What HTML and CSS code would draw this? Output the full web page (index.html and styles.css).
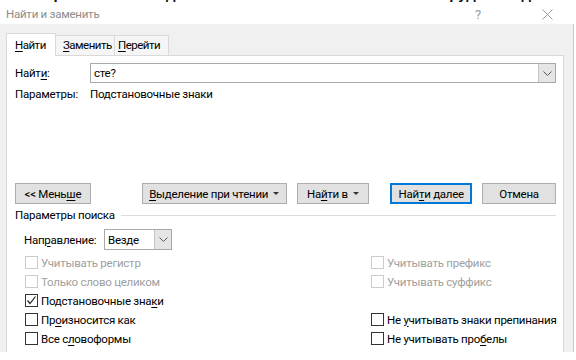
FILE: index.html
```html
<!DOCTYPE html>
<html lang="ru">
<head>
    <meta charset="UTF-8">
    <title>Найти и заменить</title>
    <link rel="stylesheet" href="styles.css">
</head>
<body>
    <div class="doc-text"><span>посмотреть текст сегодня тоже можно всем только если сотрудник отдела попросит</span></div>
    <div class="titlebar">
        <span class="title">Найти и заменить</span>
        <span class="help">?</span>
        <span class="close">
            <svg width="11" height="11" viewBox="0 0 11 11"><path d="M0.5 0.5 L10.5 10.5 M10.5 0.5 L0.5 10.5" stroke="#9a9a9a" stroke-width="1" fill="none"/></svg>
        </span>
    </div>
    <div class="dialog">
        <div class="tabs">
            <div class="tab active"><u>Н</u>айти</div>
            <div class="tab"><u>З</u>аменить</div>
            <div class="tab"><u>П</u>ерейти</div>
        </div>
        <div class="page">
            <div class="find-row">
                <span class="label">Найт<u>и</u>:</span>
                <div class="combo">
                    <span class="combo-text">сте?</span>
                    <span class="combo-arrow">
                        <svg width="9" height="5" viewBox="0 0 9 5"><path d="M0.5 0.5 L4.5 4.5 L8.5 0.5" stroke="#555" fill="none"/></svg>
                    </span>
                </div>
            </div>
            <div class="params-row">
                <span class="label">Параметры:</span>
                <span>Подстановочные знаки</span>
            </div>

            <div class="buttons">
                <button class="btn btn-less"><span>&lt;&lt; Мень<u>ш</u>е</span></button>
                <button class="btn btn-read"><span><u>В</u>ыделение при чтении</span><i class="caret"></i></button>
                <button class="btn btn-in"><span>На<u>й</u>ти в</span><i class="caret"></i></button>
                <button class="btn btn-next"><span>Най<u>т</u>и далее</span></button>
                <button class="btn btn-cancel"><span>Отмена</span></button>
            </div>

            <div class="group-title">Параметры поиска</div>

            <div class="direction">
                <span class="dir-label">Нап<u>р</u>авление:</span>
                <div class="select">
                    <span class="select-text">Везде</span>
                    <span class="select-arrow">
                        <svg width="9" height="5" viewBox="0 0 9 5"><path d="M0.5 0.5 L4.5 4.5 L8.5 0.5" stroke="#555" fill="none"/></svg>
                    </span>
                </div>
            </div>

            <div class="options">
                <label class="opt disabled"><span class="box"></span><span>Учитывать регистр</span></label>
                <label class="opt disabled"><span class="box"></span><span>Учитывать префикс</span></label>
                <label class="opt disabled"><span class="box"></span><span>Только слово целиком</span></label>
                <label class="opt disabled"><span class="box"></span><span>Учитывать суффикс</span></label>
                <label class="opt"><span class="box"><svg width="11" height="11" viewBox="0 0 11 11"><path d="M1.5 5.5 L4 8.5 L9.5 1.5" stroke="#222" stroke-width="1.2" fill="none"/></svg></span><span>Подстановочные зна<u>к</u>и</span></label>
                <span></span>
                <label class="opt"><span class="box"></span><span>Пр<u>о</u>износится как</span></label>
                <label class="opt"><span class="box"></span><span>Не <u>у</u>читывать знаки препинания</span></label>
                <label class="opt"><span class="box"></span><span>Все с<u>л</u>овоформы</span></label>
                <label class="opt"><span class="box"></span><span>Не учитывать про<u>б</u>елы</span></label>
            </div>
        </div>
    </div>
</body>
</html>
```

FILE: styles.css
```css
body {
    margin: 0;
    width: 576px;
    height: 360px;
    overflow: hidden;
    background-color: white;
    color: black;
    font-family: Roboto, "Noto Sans", sans-serif;
    font-size: 11.5px;
    letter-spacing: -0.25px;
}
u {
    text-decoration: underline;
    text-underline-offset: 2px;
}
.doc-text {
    height: 4px;
    overflow: hidden;
    white-space: nowrap;
}
.doc-text span {
    display: block;
    transform: translateY(-14px);
    font-family: "Liberation Sans", sans-serif;
    font-size: 15px;
    font-weight: bold;
    line-height: 15px;
    letter-spacing: 0;
    color: #111;
}
.titlebar {
    height: 20px;
    display: flex;
    align-items: center;
    padding: 0 23px 0 6px;
}
.title {
    color: #8c8c8c;
    flex: 1;
}
.help {
    color: #9a9a9a;
    font-size: 13px;
    width: 67px;
}
.close {
    width: 11px;
    display: flex;
}
.dialog {
    background-color: #f0f0f0;
    height: 328px;
    padding: 9px 9px 0 6px;
    box-sizing: border-box;
    border-right: 1px solid #c8c8c8;
    width: 574px;
    display: flex;
    flex-direction: column;
}
.tabs {
    display: flex;
    align-items: flex-end;
    height: 22px;
    letter-spacing: -0.5px;
}
.tab {
    height: 19px;
    line-height: 19px;
    border: 1px solid #d9d9d9;
    border-bottom: none;
    border-left: none;
    background-color: #f5f5f5;
    padding-left: 7px;
}
.tab:nth-child(2) { width: 51px; }
.tab:nth-child(3) { width: 50px; padding-left: 3px; }
.tab.active {
    height: 22px;
    line-height: 22px;
    width: 40px;
    padding-left: 8px;
    background-color: white;
    border-left: 1px solid #d9d9d9;
    position: relative;
    top: 1px;
}
.page {
    flex: 1;
    background-color: white;
    border: 1px solid #d9d9d9;
    border-bottom: none;
    padding: 7px 7px 0 8px;
}
.find-row {
    display: flex;
    align-items: center;
}
.label {
    width: 75px;
    flex-shrink: 0;
}
.combo {
    flex: 1;
    height: 18px;
    border: 1px solid #a9a9a9;
    display: flex;
    align-items: center;
}
.combo-text {
    flex: 1;
    padding-left: 3px;
}
.combo-arrow, .select-arrow {
    width: 16px;
    height: 100%;
    background-color: #e5e5e5;
    border-left: 1px solid #c4c4c4;
    display: flex;
    align-items: center;
    justify-content: center;
}
.params-row {
    display: flex;
    margin-top: 3px;
    line-height: 16px;
}
.buttons {
    display: flex;
    margin-top: 81px;
}
.btn {
    height: 21px;
    padding: 0;
    background-color: #e1e1e1;
    border: 1px solid #adadad;
    font-family: inherit;
    font-size: 11.5px;
    letter-spacing: -0.25px;
    color: black;
    display: flex;
    align-items: center;
    justify-content: center;
    white-space: nowrap;
}
.btn-less { width: 76px; }
.btn-read { width: 145px; margin-left: 51px; }
.btn-in { width: 73px; margin-left: 10px; }
.btn-next {
    width: 82px;
    margin-left: 21px;
    border-color: #0078d7;
    box-shadow: inset 0 0 0 1px #0078d7;
}
.btn-cancel { width: 74px; margin-left: 10px; }
.caret {
    display: inline-block;
    margin-left: 5px;
    border-left: 3px solid transparent;
    border-right: 3px solid transparent;
    border-top: 3px solid #333;
}
.group-title {
    display: flex;
    align-items: center;
    margin-top: 3px;
    line-height: 16px;
}
.group-title::after {
    content: "";
    flex: 1;
    height: 1px;
    background-color: #dcdcdc;
    margin-left: 6px;
}
.direction {
    display: flex;
    align-items: center;
    margin-top: 6px;
    padding-left: 9px;
}
.dir-label {
    width: 80px;
}
.select {
    width: 66px;
    height: 19px;
    border: 1px solid #a9a9a9;
    display: flex;
    align-items: center;
}
.select-text {
    flex: 1;
    padding-left: 3px;
}
.options {
    display: grid;
    grid-template-columns: 346px 1fr;
    grid-auto-rows: 19px;
    margin-top: 3px;
    padding-left: 10px;
}
.opt {
    display: flex;
    align-items: center;
    white-space: nowrap;
}
.box {
    width: 11px;
    height: 11px;
    border: 1px solid #333;
    margin-right: 3px;
    display: flex;
}
.opt.disabled {
    color: #a0a0a0;
}
.opt.disabled .box {
    border-color: #cccccc;
}
```
